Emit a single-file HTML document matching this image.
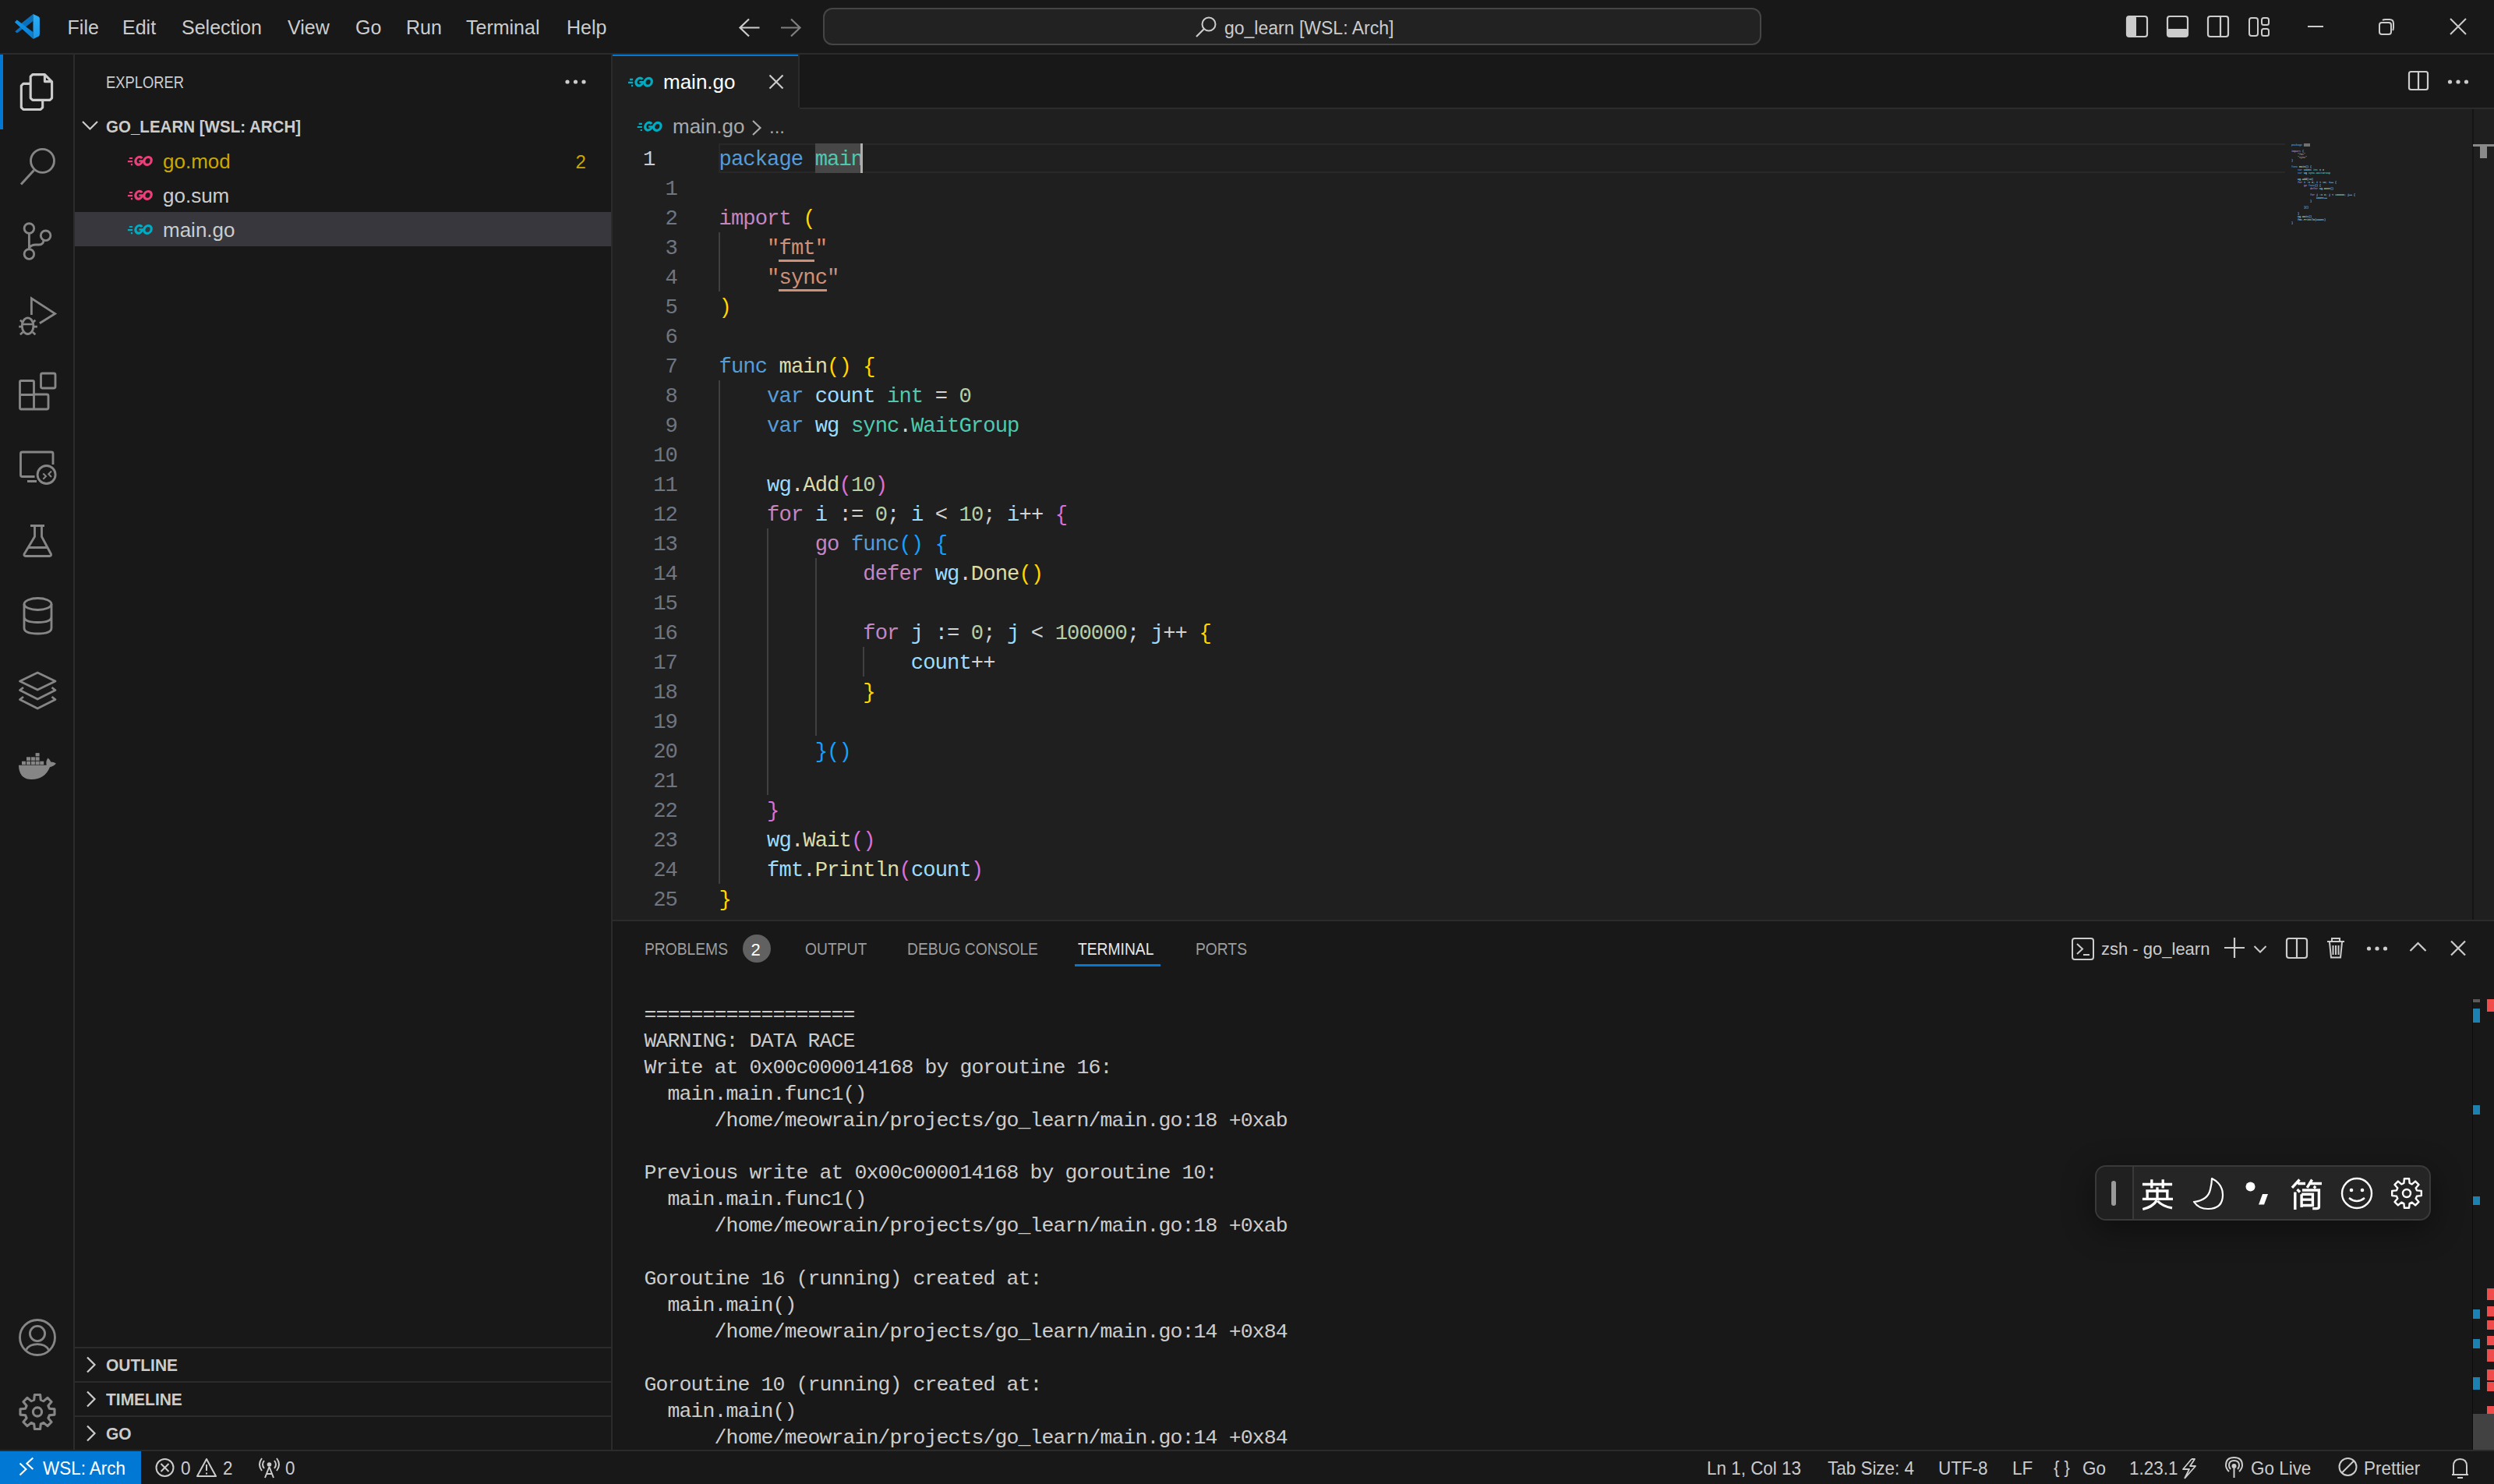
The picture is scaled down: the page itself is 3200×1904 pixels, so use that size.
<!DOCTYPE html>
<html><head><meta charset="utf-8"><title>VS Code</title>
<style>
html,body{margin:0;padding:0;width:3200px;height:1904px;overflow:hidden;background:#181818;}
body{position:relative;font-family:'Liberation Sans', sans-serif;}
</style></head><body>
<div style="position:absolute;left:0px;top:68px;width:3200px;height:2px;background:#2B2B2B;"></div><div style="position:absolute;left:86.6px;top:22.75px;font-family:'Liberation Sans', sans-serif;font-size:25px;line-height:25px;color:#CCCCCC;font-weight:400;letter-spacing:0px;white-space:pre;">File</div><div style="position:absolute;left:157px;top:22.75px;font-family:'Liberation Sans', sans-serif;font-size:25px;line-height:25px;color:#CCCCCC;font-weight:400;letter-spacing:0px;white-space:pre;">Edit</div><div style="position:absolute;left:233px;top:22.75px;font-family:'Liberation Sans', sans-serif;font-size:25px;line-height:25px;color:#CCCCCC;font-weight:400;letter-spacing:0px;white-space:pre;">Selection</div><div style="position:absolute;left:369px;top:22.75px;font-family:'Liberation Sans', sans-serif;font-size:25px;line-height:25px;color:#CCCCCC;font-weight:400;letter-spacing:0px;white-space:pre;">View</div><div style="position:absolute;left:456px;top:22.75px;font-family:'Liberation Sans', sans-serif;font-size:25px;line-height:25px;color:#CCCCCC;font-weight:400;letter-spacing:0px;white-space:pre;">Go</div><div style="position:absolute;left:521px;top:22.75px;font-family:'Liberation Sans', sans-serif;font-size:25px;line-height:25px;color:#CCCCCC;font-weight:400;letter-spacing:0px;white-space:pre;">Run</div><div style="position:absolute;left:598px;top:22.75px;font-family:'Liberation Sans', sans-serif;font-size:25px;line-height:25px;color:#CCCCCC;font-weight:400;letter-spacing:0px;white-space:pre;">Terminal</div><div style="position:absolute;left:727px;top:22.75px;font-family:'Liberation Sans', sans-serif;font-size:25px;line-height:25px;color:#CCCCCC;font-weight:400;letter-spacing:0px;white-space:pre;">Help</div><div style="position:absolute;left:1056px;top:10px;width:1204px;height:48px;box-sizing:border-box;border:2px solid #454545;border-radius:12px;background:#222222"></div><div style="position:absolute;left:1571px;top:24.95px;font-family:'Liberation Sans', sans-serif;font-size:23px;line-height:23px;color:#CCCCCC;font-weight:400;letter-spacing:0px;white-space:pre;">go_learn [WSL: Arch]</div><div style="position:absolute;left:94px;top:70px;width:2px;height:1790px;background:#2B2B2B;"></div><div style="position:absolute;left:0px;top:70px;width:4px;height:96px;background:#0078D4;"></div><div style="position:absolute;left:784px;top:70px;width:2px;height:1790px;background:#2B2B2B;"></div><div style="position:absolute;left:136px;top:95.30px;font-family:'Liberation Sans', sans-serif;font-size:22px;line-height:22px;color:#CCCCCC;font-weight:400;letter-spacing:0px;white-space:pre;transform:scaleX(0.835);transform-origin:0 0;">EXPLORER</div><div style="position:absolute;left:136px;top:152.30px;font-family:'Liberation Sans', sans-serif;font-size:22px;line-height:22px;color:#CCCCCC;font-weight:700;letter-spacing:0px;white-space:pre;transform:scaleX(0.933);transform-origin:0 0;">GO_LEARN [WSL: ARCH]</div><div style="position:absolute;left:96px;top:272px;width:688px;height:44px;background:#37373D;"></div><div style="position:absolute;left:209px;top:193.90px;font-family:'Liberation Sans', sans-serif;font-size:26px;line-height:26px;color:#CCA700;font-weight:400;letter-spacing:0px;white-space:pre;">go.mod</div><div style="position:absolute;left:738.5px;top:195.60px;font-family:'Liberation Sans', sans-serif;font-size:24px;line-height:24px;color:#CCA700;font-weight:400;letter-spacing:0px;white-space:pre;">2</div><div style="position:absolute;left:209px;top:237.90px;font-family:'Liberation Sans', sans-serif;font-size:26px;line-height:26px;color:#CCCCCC;font-weight:400;letter-spacing:0px;white-space:pre;">go.sum</div><div style="position:absolute;left:209px;top:281.90px;font-family:'Liberation Sans', sans-serif;font-size:26px;line-height:26px;color:#CCCCCC;font-weight:400;letter-spacing:0px;white-space:pre;">main.go</div><div style="position:absolute;left:96px;top:1728px;width:688px;height:2px;background:#2B2B2B;"></div><div style="position:absolute;left:136px;top:1741.30px;font-family:'Liberation Sans', sans-serif;font-size:22px;line-height:22px;color:#CCCCCC;font-weight:700;letter-spacing:0px;white-space:pre;transform:scaleX(0.953);transform-origin:0 0;">OUTLINE</div><div style="position:absolute;left:96px;top:1772px;width:688px;height:2px;background:#2B2B2B;"></div><div style="position:absolute;left:136px;top:1785.30px;font-family:'Liberation Sans', sans-serif;font-size:22px;line-height:22px;color:#CCCCCC;font-weight:700;letter-spacing:0px;white-space:pre;transform:scaleX(0.953);transform-origin:0 0;">TIMELINE</div><div style="position:absolute;left:96px;top:1816px;width:688px;height:2px;background:#2B2B2B;"></div><div style="position:absolute;left:136px;top:1829.30px;font-family:'Liberation Sans', sans-serif;font-size:22px;line-height:22px;color:#CCCCCC;font-weight:700;letter-spacing:0px;white-space:pre;transform:scaleX(0.953);transform-origin:0 0;">GO</div><div style="position:absolute;left:786px;top:70px;width:2414px;height:68px;background:#181818;"></div><div style="position:absolute;left:786px;top:138px;width:2414px;height:2px;background:#2B2B2B;"></div><div style="position:absolute;left:786px;top:70px;width:240px;height:70px;background:#1F1F1F;"></div><div style="position:absolute;left:786px;top:70px;width:240px;height:2px;background:#0078D4;"></div><div style="position:absolute;left:1024px;top:70px;width:2px;height:68px;background:#2B2B2B;"></div><div style="position:absolute;left:851px;top:91.90px;font-family:'Liberation Sans', sans-serif;font-size:26px;line-height:26px;color:#FFFFFF;font-weight:400;letter-spacing:0px;white-space:pre;">main.go</div><div style="position:absolute;left:786px;top:140px;width:2414px;height:1040px;background:#1F1F1F;"></div><div style="position:absolute;left:863px;top:148.90px;font-family:'Liberation Sans', sans-serif;font-size:26px;line-height:26px;color:#A9A9A9;font-weight:400;letter-spacing:0px;white-space:pre;">main.go</div><div style="position:absolute;left:987px;top:150.60px;font-family:'Liberation Sans', sans-serif;font-size:24px;line-height:24px;color:#A9A9A9;font-weight:400;letter-spacing:0px;white-space:pre;">...</div><div style="position:absolute;left:922.0px;top:184px;width:2009.5px;height:38px;box-sizing:border-box;border:2px solid #282828;border-right:none"></div><div style="position:absolute;left:1046px;top:184px;width:59px;height:38px;background:#474747;"></div><div style="position:absolute;left:922px;top:298px;width:2px;height:76px;background:#404040;"></div><div style="position:absolute;left:922px;top:488px;width:2px;height:646px;background:#404040;"></div><div style="position:absolute;left:984px;top:678px;width:2px;height:342px;background:#404040;"></div><div style="position:absolute;left:1046px;top:716px;width:2px;height:228px;background:#404040;"></div><div style="position:absolute;left:1107px;top:830px;width:2px;height:38px;background:#404040;"></div><div style="position:absolute;left:922.5px;top:191.33px;font-family:'Liberation Mono', monospace;font-size:27.2px;line-height:27.2px;color:#D4D4D4;font-weight:400;letter-spacing:-0.92px;white-space:pre;"><span style="color:#569CD6">package</span><span style="color:#D4D4D4"> </span><span style="color:#4EC9B0">main</span></div><div style="position:absolute;left:922.5px;top:267.33px;font-family:'Liberation Mono', monospace;font-size:27.2px;line-height:27.2px;color:#D4D4D4;font-weight:400;letter-spacing:-0.92px;white-space:pre;"><span style="color:#C586C0">import</span><span style="color:#D4D4D4"> </span><span style="color:#FFD700">(</span></div><div style="position:absolute;left:922.5px;top:305.33px;font-family:'Liberation Mono', monospace;font-size:27.2px;line-height:27.2px;color:#D4D4D4;font-weight:400;letter-spacing:-0.92px;white-space:pre;"><span style="color:#D4D4D4">    </span><span style="color:#CE9178">&quot;</span><span style="color:#CE9178">fmt</span><span style="color:#CE9178">&quot;</span></div><div style="position:absolute;left:922.5px;top:343.33px;font-family:'Liberation Mono', monospace;font-size:27.2px;line-height:27.2px;color:#D4D4D4;font-weight:400;letter-spacing:-0.92px;white-space:pre;"><span style="color:#D4D4D4">    </span><span style="color:#CE9178">&quot;</span><span style="color:#CE9178">sync</span><span style="color:#CE9178">&quot;</span></div><div style="position:absolute;left:922.5px;top:381.33px;font-family:'Liberation Mono', monospace;font-size:27.2px;line-height:27.2px;color:#D4D4D4;font-weight:400;letter-spacing:-0.92px;white-space:pre;"><span style="color:#FFD700">)</span></div><div style="position:absolute;left:922.5px;top:457.33px;font-family:'Liberation Mono', monospace;font-size:27.2px;line-height:27.2px;color:#D4D4D4;font-weight:400;letter-spacing:-0.92px;white-space:pre;"><span style="color:#569CD6">func</span><span style="color:#D4D4D4"> </span><span style="color:#DCDCAA">main</span><span style="color:#FFD700">()</span><span style="color:#D4D4D4"> </span><span style="color:#FFD700">{</span></div><div style="position:absolute;left:922.5px;top:495.33px;font-family:'Liberation Mono', monospace;font-size:27.2px;line-height:27.2px;color:#D4D4D4;font-weight:400;letter-spacing:-0.92px;white-space:pre;"><span style="color:#D4D4D4">    </span><span style="color:#569CD6">var</span><span style="color:#D4D4D4"> </span><span style="color:#9CDCFE">count</span><span style="color:#D4D4D4"> </span><span style="color:#4EC9B0">int</span><span style="color:#D4D4D4"> = </span><span style="color:#B5CEA8">0</span></div><div style="position:absolute;left:922.5px;top:533.33px;font-family:'Liberation Mono', monospace;font-size:27.2px;line-height:27.2px;color:#D4D4D4;font-weight:400;letter-spacing:-0.92px;white-space:pre;"><span style="color:#D4D4D4">    </span><span style="color:#569CD6">var</span><span style="color:#D4D4D4"> </span><span style="color:#9CDCFE">wg</span><span style="color:#D4D4D4"> </span><span style="color:#4EC9B0">sync</span><span style="color:#D4D4D4">.</span><span style="color:#4EC9B0">WaitGroup</span></div><div style="position:absolute;left:922.5px;top:609.33px;font-family:'Liberation Mono', monospace;font-size:27.2px;line-height:27.2px;color:#D4D4D4;font-weight:400;letter-spacing:-0.92px;white-space:pre;"><span style="color:#D4D4D4">    </span><span style="color:#9CDCFE">wg</span><span style="color:#D4D4D4">.</span><span style="color:#DCDCAA">Add</span><span style="color:#DA70D6">(</span><span style="color:#B5CEA8">10</span><span style="color:#DA70D6">)</span></div><div style="position:absolute;left:922.5px;top:647.33px;font-family:'Liberation Mono', monospace;font-size:27.2px;line-height:27.2px;color:#D4D4D4;font-weight:400;letter-spacing:-0.92px;white-space:pre;"><span style="color:#D4D4D4">    </span><span style="color:#C586C0">for</span><span style="color:#D4D4D4"> </span><span style="color:#9CDCFE">i</span><span style="color:#D4D4D4"> := </span><span style="color:#B5CEA8">0</span><span style="color:#D4D4D4">; </span><span style="color:#9CDCFE">i</span><span style="color:#D4D4D4"> &lt; </span><span style="color:#B5CEA8">10</span><span style="color:#D4D4D4">; </span><span style="color:#9CDCFE">i</span><span style="color:#D4D4D4">++ </span><span style="color:#DA70D6">{</span></div><div style="position:absolute;left:922.5px;top:685.33px;font-family:'Liberation Mono', monospace;font-size:27.2px;line-height:27.2px;color:#D4D4D4;font-weight:400;letter-spacing:-0.92px;white-space:pre;"><span style="color:#D4D4D4">        </span><span style="color:#C586C0">go</span><span style="color:#D4D4D4"> </span><span style="color:#569CD6">func</span><span style="color:#179FFF">()</span><span style="color:#D4D4D4"> </span><span style="color:#179FFF">{</span></div><div style="position:absolute;left:922.5px;top:723.33px;font-family:'Liberation Mono', monospace;font-size:27.2px;line-height:27.2px;color:#D4D4D4;font-weight:400;letter-spacing:-0.92px;white-space:pre;"><span style="color:#D4D4D4">            </span><span style="color:#C586C0">defer</span><span style="color:#D4D4D4"> </span><span style="color:#9CDCFE">wg</span><span style="color:#D4D4D4">.</span><span style="color:#DCDCAA">Done</span><span style="color:#FFD700">()</span></div><div style="position:absolute;left:922.5px;top:799.33px;font-family:'Liberation Mono', monospace;font-size:27.2px;line-height:27.2px;color:#D4D4D4;font-weight:400;letter-spacing:-0.92px;white-space:pre;"><span style="color:#D4D4D4">            </span><span style="color:#C586C0">for</span><span style="color:#D4D4D4"> </span><span style="color:#9CDCFE">j</span><span style="color:#D4D4D4"> := </span><span style="color:#B5CEA8">0</span><span style="color:#D4D4D4">; </span><span style="color:#9CDCFE">j</span><span style="color:#D4D4D4"> &lt; </span><span style="color:#B5CEA8">100000</span><span style="color:#D4D4D4">; </span><span style="color:#9CDCFE">j</span><span style="color:#D4D4D4">++ </span><span style="color:#FFD700">{</span></div><div style="position:absolute;left:922.5px;top:837.33px;font-family:'Liberation Mono', monospace;font-size:27.2px;line-height:27.2px;color:#D4D4D4;font-weight:400;letter-spacing:-0.92px;white-space:pre;"><span style="color:#D4D4D4">                </span><span style="color:#9CDCFE">count</span><span style="color:#D4D4D4">++</span></div><div style="position:absolute;left:922.5px;top:875.33px;font-family:'Liberation Mono', monospace;font-size:27.2px;line-height:27.2px;color:#D4D4D4;font-weight:400;letter-spacing:-0.92px;white-space:pre;"><span style="color:#D4D4D4">            </span><span style="color:#FFD700">}</span></div><div style="position:absolute;left:922.5px;top:951.33px;font-family:'Liberation Mono', monospace;font-size:27.2px;line-height:27.2px;color:#D4D4D4;font-weight:400;letter-spacing:-0.92px;white-space:pre;"><span style="color:#D4D4D4">        </span><span style="color:#179FFF">}</span><span style="color:#179FFF">()</span></div><div style="position:absolute;left:922.5px;top:1027.33px;font-family:'Liberation Mono', monospace;font-size:27.2px;line-height:27.2px;color:#D4D4D4;font-weight:400;letter-spacing:-0.92px;white-space:pre;"><span style="color:#D4D4D4">    </span><span style="color:#DA70D6">}</span></div><div style="position:absolute;left:922.5px;top:1065.33px;font-family:'Liberation Mono', monospace;font-size:27.2px;line-height:27.2px;color:#D4D4D4;font-weight:400;letter-spacing:-0.92px;white-space:pre;"><span style="color:#D4D4D4">    </span><span style="color:#9CDCFE">wg</span><span style="color:#D4D4D4">.</span><span style="color:#DCDCAA">Wait</span><span style="color:#DA70D6">()</span></div><div style="position:absolute;left:922.5px;top:1103.33px;font-family:'Liberation Mono', monospace;font-size:27.2px;line-height:27.2px;color:#D4D4D4;font-weight:400;letter-spacing:-0.92px;white-space:pre;"><span style="color:#D4D4D4">    </span><span style="color:#9CDCFE">fmt</span><span style="color:#D4D4D4">.</span><span style="color:#DCDCAA">Println</span><span style="color:#DA70D6">(</span><span style="color:#9CDCFE">count</span><span style="color:#DA70D6">)</span></div><div style="position:absolute;left:922.5px;top:1141.33px;font-family:'Liberation Mono', monospace;font-size:27.2px;line-height:27.2px;color:#D4D4D4;font-weight:400;letter-spacing:-0.92px;white-space:pre;"><span style="color:#FFD700">}</span></div><div style="position:absolute;left:999px;top:333px;width:46px;height:3px;background:#CE9178;"></div><div style="position:absolute;left:999px;top:371px;width:62px;height:3px;background:#CE9178;"></div><div style="position:absolute;left:1104px;top:184px;width:3px;height:38px;background:#AEAFAD;"></div><div style="position:absolute;left:825px;top:191.33px;font-family:'Liberation Mono', monospace;font-size:27.2px;line-height:27.2px;color:#CCCCCC;font-weight:400;letter-spacing:-0.92px;white-space:pre;">1</div><div style="position:absolute;left:853.6px;top:229.33px;font-family:'Liberation Mono', monospace;font-size:27.2px;line-height:27.2px;color:#6E7681;font-weight:400;letter-spacing:-0.92px;white-space:pre;">1</div><div style="position:absolute;left:853.6px;top:267.33px;font-family:'Liberation Mono', monospace;font-size:27.2px;line-height:27.2px;color:#6E7681;font-weight:400;letter-spacing:-0.92px;white-space:pre;">2</div><div style="position:absolute;left:853.6px;top:305.33px;font-family:'Liberation Mono', monospace;font-size:27.2px;line-height:27.2px;color:#6E7681;font-weight:400;letter-spacing:-0.92px;white-space:pre;">3</div><div style="position:absolute;left:853.6px;top:343.33px;font-family:'Liberation Mono', monospace;font-size:27.2px;line-height:27.2px;color:#6E7681;font-weight:400;letter-spacing:-0.92px;white-space:pre;">4</div><div style="position:absolute;left:853.6px;top:381.33px;font-family:'Liberation Mono', monospace;font-size:27.2px;line-height:27.2px;color:#6E7681;font-weight:400;letter-spacing:-0.92px;white-space:pre;">5</div><div style="position:absolute;left:853.6px;top:419.33px;font-family:'Liberation Mono', monospace;font-size:27.2px;line-height:27.2px;color:#6E7681;font-weight:400;letter-spacing:-0.92px;white-space:pre;">6</div><div style="position:absolute;left:853.6px;top:457.33px;font-family:'Liberation Mono', monospace;font-size:27.2px;line-height:27.2px;color:#6E7681;font-weight:400;letter-spacing:-0.92px;white-space:pre;">7</div><div style="position:absolute;left:853.6px;top:495.33px;font-family:'Liberation Mono', monospace;font-size:27.2px;line-height:27.2px;color:#6E7681;font-weight:400;letter-spacing:-0.92px;white-space:pre;">8</div><div style="position:absolute;left:853.6px;top:533.33px;font-family:'Liberation Mono', monospace;font-size:27.2px;line-height:27.2px;color:#6E7681;font-weight:400;letter-spacing:-0.92px;white-space:pre;">9</div><div style="position:absolute;left:838.2px;top:571.33px;font-family:'Liberation Mono', monospace;font-size:27.2px;line-height:27.2px;color:#6E7681;font-weight:400;letter-spacing:-0.92px;white-space:pre;">10</div><div style="position:absolute;left:838.2px;top:609.33px;font-family:'Liberation Mono', monospace;font-size:27.2px;line-height:27.2px;color:#6E7681;font-weight:400;letter-spacing:-0.92px;white-space:pre;">11</div><div style="position:absolute;left:838.2px;top:647.33px;font-family:'Liberation Mono', monospace;font-size:27.2px;line-height:27.2px;color:#6E7681;font-weight:400;letter-spacing:-0.92px;white-space:pre;">12</div><div style="position:absolute;left:838.2px;top:685.33px;font-family:'Liberation Mono', monospace;font-size:27.2px;line-height:27.2px;color:#6E7681;font-weight:400;letter-spacing:-0.92px;white-space:pre;">13</div><div style="position:absolute;left:838.2px;top:723.33px;font-family:'Liberation Mono', monospace;font-size:27.2px;line-height:27.2px;color:#6E7681;font-weight:400;letter-spacing:-0.92px;white-space:pre;">14</div><div style="position:absolute;left:838.2px;top:761.33px;font-family:'Liberation Mono', monospace;font-size:27.2px;line-height:27.2px;color:#6E7681;font-weight:400;letter-spacing:-0.92px;white-space:pre;">15</div><div style="position:absolute;left:838.2px;top:799.33px;font-family:'Liberation Mono', monospace;font-size:27.2px;line-height:27.2px;color:#6E7681;font-weight:400;letter-spacing:-0.92px;white-space:pre;">16</div><div style="position:absolute;left:838.2px;top:837.33px;font-family:'Liberation Mono', monospace;font-size:27.2px;line-height:27.2px;color:#6E7681;font-weight:400;letter-spacing:-0.92px;white-space:pre;">17</div><div style="position:absolute;left:838.2px;top:875.33px;font-family:'Liberation Mono', monospace;font-size:27.2px;line-height:27.2px;color:#6E7681;font-weight:400;letter-spacing:-0.92px;white-space:pre;">18</div><div style="position:absolute;left:838.2px;top:913.33px;font-family:'Liberation Mono', monospace;font-size:27.2px;line-height:27.2px;color:#6E7681;font-weight:400;letter-spacing:-0.92px;white-space:pre;">19</div><div style="position:absolute;left:838.2px;top:951.33px;font-family:'Liberation Mono', monospace;font-size:27.2px;line-height:27.2px;color:#6E7681;font-weight:400;letter-spacing:-0.92px;white-space:pre;">20</div><div style="position:absolute;left:838.2px;top:989.33px;font-family:'Liberation Mono', monospace;font-size:27.2px;line-height:27.2px;color:#6E7681;font-weight:400;letter-spacing:-0.92px;white-space:pre;">21</div><div style="position:absolute;left:838.2px;top:1027.33px;font-family:'Liberation Mono', monospace;font-size:27.2px;line-height:27.2px;color:#6E7681;font-weight:400;letter-spacing:-0.92px;white-space:pre;">22</div><div style="position:absolute;left:838.2px;top:1065.33px;font-family:'Liberation Mono', monospace;font-size:27.2px;line-height:27.2px;color:#6E7681;font-weight:400;letter-spacing:-0.92px;white-space:pre;">23</div><div style="position:absolute;left:838.2px;top:1103.33px;font-family:'Liberation Mono', monospace;font-size:27.2px;line-height:27.2px;color:#6E7681;font-weight:400;letter-spacing:-0.92px;white-space:pre;">24</div><div style="position:absolute;left:838.2px;top:1141.33px;font-family:'Liberation Mono', monospace;font-size:27.2px;line-height:27.2px;color:#6E7681;font-weight:400;letter-spacing:-0.92px;white-space:pre;">25</div><div style="position:absolute;left:2932px;top:140px;width:241px;height:1040px;background:#1F1F1F;"></div><div style="position:absolute;left:2940px;top:183.7px;font-family:'Liberation Mono', monospace;font-size:3.333px;line-height:4px;white-space:pre;opacity:0.9;font-weight:700"><span style="color:#569CD6">package</span><span style="color:#D4D4D4"> </span><span style="color:#4EC9B0">main</span></div><div style="position:absolute;left:2940px;top:191.7px;font-family:'Liberation Mono', monospace;font-size:3.333px;line-height:4px;white-space:pre;opacity:0.9;font-weight:700"><span style="color:#C586C0">import</span><span style="color:#D4D4D4"> </span><span style="color:#D4D4D4">(</span></div><div style="position:absolute;left:2940px;top:195.7px;font-family:'Liberation Mono', monospace;font-size:3.333px;line-height:4px;white-space:pre;opacity:0.9;font-weight:700"><span style="color:#D4D4D4">    </span><span style="color:#CE9178">&quot;</span><span style="color:#CE9178">fmt</span><span style="color:#CE9178">&quot;</span></div><div style="position:absolute;left:2940px;top:199.7px;font-family:'Liberation Mono', monospace;font-size:3.333px;line-height:4px;white-space:pre;opacity:0.9;font-weight:700"><span style="color:#D4D4D4">    </span><span style="color:#CE9178">&quot;</span><span style="color:#CE9178">sync</span><span style="color:#CE9178">&quot;</span></div><div style="position:absolute;left:2940px;top:203.7px;font-family:'Liberation Mono', monospace;font-size:3.333px;line-height:4px;white-space:pre;opacity:0.9;font-weight:700"><span style="color:#D4D4D4">)</span></div><div style="position:absolute;left:2940px;top:211.7px;font-family:'Liberation Mono', monospace;font-size:3.333px;line-height:4px;white-space:pre;opacity:0.9;font-weight:700"><span style="color:#569CD6">func</span><span style="color:#D4D4D4"> </span><span style="color:#DCDCAA">main</span><span style="color:#D4D4D4">()</span><span style="color:#D4D4D4"> </span><span style="color:#D4D4D4">{</span></div><div style="position:absolute;left:2940px;top:215.7px;font-family:'Liberation Mono', monospace;font-size:3.333px;line-height:4px;white-space:pre;opacity:0.9;font-weight:700"><span style="color:#D4D4D4">    </span><span style="color:#569CD6">var</span><span style="color:#D4D4D4"> </span><span style="color:#9CDCFE">count</span><span style="color:#D4D4D4"> </span><span style="color:#4EC9B0">int</span><span style="color:#D4D4D4"> = </span><span style="color:#B5CEA8">0</span></div><div style="position:absolute;left:2940px;top:219.7px;font-family:'Liberation Mono', monospace;font-size:3.333px;line-height:4px;white-space:pre;opacity:0.9;font-weight:700"><span style="color:#D4D4D4">    </span><span style="color:#569CD6">var</span><span style="color:#D4D4D4"> </span><span style="color:#9CDCFE">wg</span><span style="color:#D4D4D4"> </span><span style="color:#4EC9B0">sync</span><span style="color:#D4D4D4">.</span><span style="color:#4EC9B0">WaitGroup</span></div><div style="position:absolute;left:2940px;top:227.7px;font-family:'Liberation Mono', monospace;font-size:3.333px;line-height:4px;white-space:pre;opacity:0.9;font-weight:700"><span style="color:#D4D4D4">    </span><span style="color:#9CDCFE">wg</span><span style="color:#D4D4D4">.</span><span style="color:#DCDCAA">Add</span><span style="color:#D4D4D4">(</span><span style="color:#B5CEA8">10</span><span style="color:#D4D4D4">)</span></div><div style="position:absolute;left:2940px;top:231.7px;font-family:'Liberation Mono', monospace;font-size:3.333px;line-height:4px;white-space:pre;opacity:0.9;font-weight:700"><span style="color:#D4D4D4">    </span><span style="color:#C586C0">for</span><span style="color:#D4D4D4"> </span><span style="color:#9CDCFE">i</span><span style="color:#D4D4D4"> := </span><span style="color:#B5CEA8">0</span><span style="color:#D4D4D4">; </span><span style="color:#9CDCFE">i</span><span style="color:#D4D4D4"> &lt; </span><span style="color:#B5CEA8">10</span><span style="color:#D4D4D4">; </span><span style="color:#9CDCFE">i</span><span style="color:#D4D4D4">++ </span><span style="color:#D4D4D4">{</span></div><div style="position:absolute;left:2940px;top:235.7px;font-family:'Liberation Mono', monospace;font-size:3.333px;line-height:4px;white-space:pre;opacity:0.9;font-weight:700"><span style="color:#D4D4D4">        </span><span style="color:#C586C0">go</span><span style="color:#D4D4D4"> </span><span style="color:#569CD6">func</span><span style="color:#D4D4D4">()</span><span style="color:#D4D4D4"> </span><span style="color:#D4D4D4">{</span></div><div style="position:absolute;left:2940px;top:239.7px;font-family:'Liberation Mono', monospace;font-size:3.333px;line-height:4px;white-space:pre;opacity:0.9;font-weight:700"><span style="color:#D4D4D4">            </span><span style="color:#C586C0">defer</span><span style="color:#D4D4D4"> </span><span style="color:#9CDCFE">wg</span><span style="color:#D4D4D4">.</span><span style="color:#DCDCAA">Done</span><span style="color:#D4D4D4">()</span></div><div style="position:absolute;left:2940px;top:247.7px;font-family:'Liberation Mono', monospace;font-size:3.333px;line-height:4px;white-space:pre;opacity:0.9;font-weight:700"><span style="color:#D4D4D4">            </span><span style="color:#C586C0">for</span><span style="color:#D4D4D4"> </span><span style="color:#9CDCFE">j</span><span style="color:#D4D4D4"> := </span><span style="color:#B5CEA8">0</span><span style="color:#D4D4D4">; </span><span style="color:#9CDCFE">j</span><span style="color:#D4D4D4"> &lt; </span><span style="color:#B5CEA8">100000</span><span style="color:#D4D4D4">; </span><span style="color:#9CDCFE">j</span><span style="color:#D4D4D4">++ </span><span style="color:#D4D4D4">{</span></div><div style="position:absolute;left:2940px;top:251.7px;font-family:'Liberation Mono', monospace;font-size:3.333px;line-height:4px;white-space:pre;opacity:0.9;font-weight:700"><span style="color:#D4D4D4">                </span><span style="color:#9CDCFE">count</span><span style="color:#D4D4D4">++</span></div><div style="position:absolute;left:2940px;top:255.7px;font-family:'Liberation Mono', monospace;font-size:3.333px;line-height:4px;white-space:pre;opacity:0.9;font-weight:700"><span style="color:#D4D4D4">            </span><span style="color:#D4D4D4">}</span></div><div style="position:absolute;left:2940px;top:263.7px;font-family:'Liberation Mono', monospace;font-size:3.333px;line-height:4px;white-space:pre;opacity:0.9;font-weight:700"><span style="color:#D4D4D4">        </span><span style="color:#D4D4D4">}</span><span style="color:#D4D4D4">()</span></div><div style="position:absolute;left:2940px;top:271.7px;font-family:'Liberation Mono', monospace;font-size:3.333px;line-height:4px;white-space:pre;opacity:0.9;font-weight:700"><span style="color:#D4D4D4">    </span><span style="color:#D4D4D4">}</span></div><div style="position:absolute;left:2940px;top:275.7px;font-family:'Liberation Mono', monospace;font-size:3.333px;line-height:4px;white-space:pre;opacity:0.9;font-weight:700"><span style="color:#D4D4D4">    </span><span style="color:#9CDCFE">wg</span><span style="color:#D4D4D4">.</span><span style="color:#DCDCAA">Wait</span><span style="color:#D4D4D4">()</span></div><div style="position:absolute;left:2940px;top:279.7px;font-family:'Liberation Mono', monospace;font-size:3.333px;line-height:4px;white-space:pre;opacity:0.9;font-weight:700"><span style="color:#D4D4D4">    </span><span style="color:#9CDCFE">fmt</span><span style="color:#D4D4D4">.</span><span style="color:#DCDCAA">Println</span><span style="color:#D4D4D4">(</span><span style="color:#9CDCFE">count</span><span style="color:#D4D4D4">)</span></div><div style="position:absolute;left:2940px;top:283.7px;font-family:'Liberation Mono', monospace;font-size:3.333px;line-height:4px;white-space:pre;opacity:0.9;font-weight:700"><span style="color:#D4D4D4">}</span></div><div style="position:absolute;left:2956px;top:184px;width:8px;height:4px;background:#707070;"></div><div style="position:absolute;left:3172px;top:140px;width:2px;height:1040px;background:#141414;"></div><div style="position:absolute;left:3173px;top:185px;width:27px;height:3px;background:#8a8a8a;"></div><div style="position:absolute;left:3182px;top:185px;width:9px;height:18px;background:#8a8a8a;"></div><div style="position:absolute;left:786px;top:1180px;width:2414px;height:2px;background:#2B2B2B;"></div><div style="position:absolute;left:786px;top:1182px;width:2414px;height:678px;background:#181818;"></div><div style="position:absolute;left:826.5px;top:1207.30px;font-family:'Liberation Sans', sans-serif;font-size:22px;line-height:22px;color:#9D9D9D;font-weight:400;letter-spacing:0px;white-space:pre;transform:scaleX(0.875);transform-origin:0 0;">PROBLEMS</div><div style="position:absolute;left:1033px;top:1207.30px;font-family:'Liberation Sans', sans-serif;font-size:22px;line-height:22px;color:#9D9D9D;font-weight:400;letter-spacing:0px;white-space:pre;transform:scaleX(0.875);transform-origin:0 0;">OUTPUT</div><div style="position:absolute;left:1164px;top:1207.30px;font-family:'Liberation Sans', sans-serif;font-size:22px;line-height:22px;color:#9D9D9D;font-weight:400;letter-spacing:0px;white-space:pre;transform:scaleX(0.875);transform-origin:0 0;">DEBUG CONSOLE</div><div style="position:absolute;left:1383px;top:1207.30px;font-family:'Liberation Sans', sans-serif;font-size:22px;line-height:22px;color:#E7E7E7;font-weight:400;letter-spacing:0px;white-space:pre;transform:scaleX(0.875);transform-origin:0 0;">TERMINAL</div><div style="position:absolute;left:1534px;top:1207.30px;font-family:'Liberation Sans', sans-serif;font-size:22px;line-height:22px;color:#9D9D9D;font-weight:400;letter-spacing:0px;white-space:pre;transform:scaleX(0.875);transform-origin:0 0;">PORTS</div><div style="position:absolute;left:953px;top:1199px;width:36px;height:36px;border-radius:18px;background:#616161"></div><div style="position:absolute;left:963.5px;top:1207.80px;font-family:'Liberation Sans', sans-serif;font-size:22px;line-height:22px;color:#FFFFFF;font-weight:400;letter-spacing:0px;white-space:pre;">2</div><div style="position:absolute;left:1379px;top:1237px;width:110px;height:3px;background:#0078D4;"></div><div style="position:absolute;left:2696px;top:1207.30px;font-family:'Liberation Sans', sans-serif;font-size:22px;line-height:22px;color:#CCCCCC;font-weight:400;letter-spacing:0px;white-space:pre;">zsh - go_learn</div><div style="position:absolute;left:826.5px;top:1288.86px;font-family:'Liberation Mono', monospace;font-size:26.5px;line-height:26.5px;color:#CCCCCC;font-weight:400;letter-spacing:-0.9px;white-space:pre;">==================</div><div style="position:absolute;left:826.5px;top:1322.79px;font-family:'Liberation Mono', monospace;font-size:26.5px;line-height:26.5px;color:#CCCCCC;font-weight:400;letter-spacing:-0.9px;white-space:pre;">WARNING: DATA RACE</div><div style="position:absolute;left:826.5px;top:1356.72px;font-family:'Liberation Mono', monospace;font-size:26.5px;line-height:26.5px;color:#CCCCCC;font-weight:400;letter-spacing:-0.9px;white-space:pre;">Write at 0x00c000014168 by goroutine 16:</div><div style="position:absolute;left:826.5px;top:1390.65px;font-family:'Liberation Mono', monospace;font-size:26.5px;line-height:26.5px;color:#CCCCCC;font-weight:400;letter-spacing:-0.9px;white-space:pre;">  main.main.func1()</div><div style="position:absolute;left:826.5px;top:1424.58px;font-family:'Liberation Mono', monospace;font-size:26.5px;line-height:26.5px;color:#CCCCCC;font-weight:400;letter-spacing:-0.9px;white-space:pre;">      /home/meowrain/projects/go_learn/main.go:18 +0xab</div><div style="position:absolute;left:826.5px;top:1492.44px;font-family:'Liberation Mono', monospace;font-size:26.5px;line-height:26.5px;color:#CCCCCC;font-weight:400;letter-spacing:-0.9px;white-space:pre;">Previous write at 0x00c000014168 by goroutine 10:</div><div style="position:absolute;left:826.5px;top:1526.37px;font-family:'Liberation Mono', monospace;font-size:26.5px;line-height:26.5px;color:#CCCCCC;font-weight:400;letter-spacing:-0.9px;white-space:pre;">  main.main.func1()</div><div style="position:absolute;left:826.5px;top:1560.30px;font-family:'Liberation Mono', monospace;font-size:26.5px;line-height:26.5px;color:#CCCCCC;font-weight:400;letter-spacing:-0.9px;white-space:pre;">      /home/meowrain/projects/go_learn/main.go:18 +0xab</div><div style="position:absolute;left:826.5px;top:1628.16px;font-family:'Liberation Mono', monospace;font-size:26.5px;line-height:26.5px;color:#CCCCCC;font-weight:400;letter-spacing:-0.9px;white-space:pre;">Goroutine 16 (running) created at:</div><div style="position:absolute;left:826.5px;top:1662.09px;font-family:'Liberation Mono', monospace;font-size:26.5px;line-height:26.5px;color:#CCCCCC;font-weight:400;letter-spacing:-0.9px;white-space:pre;">  main.main()</div><div style="position:absolute;left:826.5px;top:1696.02px;font-family:'Liberation Mono', monospace;font-size:26.5px;line-height:26.5px;color:#CCCCCC;font-weight:400;letter-spacing:-0.9px;white-space:pre;">      /home/meowrain/projects/go_learn/main.go:14 +0x84</div><div style="position:absolute;left:826.5px;top:1763.88px;font-family:'Liberation Mono', monospace;font-size:26.5px;line-height:26.5px;color:#CCCCCC;font-weight:400;letter-spacing:-0.9px;white-space:pre;">Goroutine 10 (running) created at:</div><div style="position:absolute;left:826.5px;top:1797.81px;font-family:'Liberation Mono', monospace;font-size:26.5px;line-height:26.5px;color:#CCCCCC;font-weight:400;letter-spacing:-0.9px;white-space:pre;">  main.main()</div><div style="position:absolute;left:826.5px;top:1831.74px;font-family:'Liberation Mono', monospace;font-size:26.5px;line-height:26.5px;color:#CCCCCC;font-weight:400;letter-spacing:-0.9px;white-space:pre;">      /home/meowrain/projects/go_learn/main.go:14 +0x84</div><div style="position:absolute;left:3172px;top:1282px;width:1px;height:578px;background:#0c0c0c;"></div><div style="position:absolute;left:3173px;top:1282px;width:9px;height:4px;background:#5a5a5a;"></div><div style="position:absolute;left:3173px;top:1294px;width:9px;height:18px;background:#1B80B2;"></div><div style="position:absolute;left:3173px;top:1418px;width:9px;height:12px;background:#1B80B2;"></div><div style="position:absolute;left:3173px;top:1535px;width:9px;height:11px;background:#1B80B2;"></div><div style="position:absolute;left:3173px;top:1680px;width:9px;height:12px;background:#1B80B2;"></div><div style="position:absolute;left:3173px;top:1718px;width:9px;height:12px;background:#1B80B2;"></div><div style="position:absolute;left:3173px;top:1767px;width:9px;height:16px;background:#1B80B2;"></div><div style="position:absolute;left:3191px;top:1282px;width:9px;height:16px;background:#F14C4C;"></div><div style="position:absolute;left:3191px;top:1653px;width:9px;height:15px;background:#F14C4C;"></div><div style="position:absolute;left:3191px;top:1676px;width:9px;height:13px;background:#F14C4C;"></div><div style="position:absolute;left:3191px;top:1694px;width:9px;height:12px;background:#F14C4C;"></div><div style="position:absolute;left:3191px;top:1714px;width:9px;height:12px;background:#F14C4C;"></div><div style="position:absolute;left:3191px;top:1731px;width:9px;height:16px;background:#F14C4C;"></div><div style="position:absolute;left:3191px;top:1757px;width:9px;height:14px;background:#F14C4C;"></div><div style="position:absolute;left:3191px;top:1773px;width:9px;height:12px;background:#F14C4C;"></div><div style="position:absolute;left:3191px;top:1804px;width:9px;height:12px;background:#F14C4C;"></div><div style="position:absolute;left:3173px;top:1814px;width:27px;height:46px;background:#424242;"></div><div style="position:absolute;left:2688px;top:1495px;width:431px;height:71px;box-sizing:border-box;border:2px solid #3A3A3A;border-radius:14px;background:#252525;box-shadow:0 10px 40px rgba(0,0,0,0.45)"></div><div style="position:absolute;left:2690px;top:1497px;width:46px;height:67px;background:#202020;border-radius:12px 0 0 12px;"></div><div style="position:absolute;left:2736px;top:1497px;width:2px;height:67px;background:#3A3A3A;"></div><div style="position:absolute;left:2709px;top:1515px;width:6px;height:32px;background:#9A9A9A;border-radius:3px;"></div><div style="position:absolute;left:0px;top:1860px;width:3200px;height:2px;background:#2B2B2B;"></div><div style="position:absolute;left:0px;top:1862px;width:3200px;height:42px;background:#181818;"></div><div style="position:absolute;left:0px;top:1862px;width:181px;height:42px;background:#0078D4;"></div><div style="position:absolute;left:54.5px;top:1871.60px;font-family:'Liberation Sans', sans-serif;font-size:24px;line-height:24px;color:#FFFFFF;font-weight:400;letter-spacing:0px;white-space:pre;transform:scaleX(0.935);transform-origin:0 0;">WSL: Arch</div><div style="position:absolute;left:232px;top:1871.60px;font-family:'Liberation Sans', sans-serif;font-size:24px;line-height:24px;color:#CCCCCC;font-weight:400;letter-spacing:0px;white-space:pre;transform:scaleX(0.935);transform-origin:0 0;">0</div><div style="position:absolute;left:286px;top:1871.60px;font-family:'Liberation Sans', sans-serif;font-size:24px;line-height:24px;color:#CCCCCC;font-weight:400;letter-spacing:0px;white-space:pre;transform:scaleX(0.935);transform-origin:0 0;">2</div><div style="position:absolute;left:366px;top:1871.60px;font-family:'Liberation Sans', sans-serif;font-size:24px;line-height:24px;color:#CCCCCC;font-weight:400;letter-spacing:0px;white-space:pre;transform:scaleX(0.935);transform-origin:0 0;">0</div><div style="position:absolute;left:2190px;top:1871.60px;font-family:'Liberation Sans', sans-serif;font-size:24px;line-height:24px;color:#CCCCCC;font-weight:400;letter-spacing:0px;white-space:pre;transform:scaleX(0.935);transform-origin:0 0;">Ln 1, Col 13</div><div style="position:absolute;left:2345px;top:1871.60px;font-family:'Liberation Sans', sans-serif;font-size:24px;line-height:24px;color:#CCCCCC;font-weight:400;letter-spacing:0px;white-space:pre;transform:scaleX(0.935);transform-origin:0 0;">Tab Size: 4</div><div style="position:absolute;left:2487px;top:1871.60px;font-family:'Liberation Sans', sans-serif;font-size:24px;line-height:24px;color:#CCCCCC;font-weight:400;letter-spacing:0px;white-space:pre;transform:scaleX(0.935);transform-origin:0 0;">UTF-8</div><div style="position:absolute;left:2582px;top:1871.60px;font-family:'Liberation Sans', sans-serif;font-size:24px;line-height:24px;color:#CCCCCC;font-weight:400;letter-spacing:0px;white-space:pre;transform:scaleX(0.935);transform-origin:0 0;">LF</div><div style="position:absolute;left:2672px;top:1871.60px;font-family:'Liberation Sans', sans-serif;font-size:24px;line-height:24px;color:#CCCCCC;font-weight:400;letter-spacing:0px;white-space:pre;transform:scaleX(0.935);transform-origin:0 0;">Go</div><div style="position:absolute;left:2732px;top:1871.60px;font-family:'Liberation Sans', sans-serif;font-size:24px;line-height:24px;color:#CCCCCC;font-weight:400;letter-spacing:0px;white-space:pre;transform:scaleX(0.935);transform-origin:0 0;">1.23.1</div><div style="position:absolute;left:2888px;top:1871.60px;font-family:'Liberation Sans', sans-serif;font-size:24px;line-height:24px;color:#CCCCCC;font-weight:400;letter-spacing:0px;white-space:pre;transform:scaleX(0.935);transform-origin:0 0;">Go Live</div><div style="position:absolute;left:3033px;top:1871.60px;font-family:'Liberation Sans', sans-serif;font-size:24px;line-height:24px;color:#CCCCCC;font-weight:400;letter-spacing:0px;white-space:pre;transform:scaleX(0.935);transform-origin:0 0;">Prettier</div><div style="position:absolute;left:2635px;top:1872.30px;font-family:'Liberation Sans', sans-serif;font-size:22px;line-height:22px;color:#CCCCCC;font-weight:400;letter-spacing:0px;white-space:pre;">{ }</div>
<svg style="position:absolute;left:0;top:0" width="3200" height="1904" viewBox="0 0 3200 1904">
<defs><linearGradient id="lgR" x1="0" y1="0" x2="0" y2="1"><stop offset="0" stop-color="#2AB0F7"/><stop offset="1" stop-color="#1A96E8"/></linearGradient>
<linearGradient id="lgL" x1="0" y1="0" x2="1" y2="1"><stop offset="0" stop-color="#0F99EC"/><stop offset="1" stop-color="#0A7BD0"/></linearGradient></defs>
<path d="M42.5 17.9 L42.5 27 L32 35.2 L26 31 Z" fill="#0B70BC"/>
<path d="M19.3 40.2 L21.9 42.5 L29.5 36.8 L26.5 34.2 Z" fill="#0B70BC"/>
<path d="M18.9 28.4 L21.7 25.6 L42.5 41.2 L42.5 50.1 Z" fill="url(#lgL)"/>
<path d="M42.5 17.9 L49.4 21.2 Q50.9 22 50.9 24 V44.1 Q50.9 46.1 49.4 46.8 L42.5 50.1 Z" fill="url(#lgR)"/><path d="M961 24.5 L949.5 35.5 L961 46.5 M950 35.5 H974.5" stroke="#CCCCCC" stroke-width="2.2" fill="none"/><path d="M1015 24.5 L1026.5 35.5 L1015 46.5 M1026 35.5 H1002" stroke="#7F7F7F" stroke-width="2.2" fill="none"/><circle cx="1551" cy="31" r="8.5" stroke="#CCCCCC" stroke-width="2" fill="none"/><path d="M1545 37 L1535 47" stroke="#CCCCCC" stroke-width="2.2"/><rect x="2729" y="21" width="26" height="26" rx="3" stroke="#CCCCCC" stroke-width="2.2" fill="none"/><rect x="2729" y="21" width="12" height="26" rx="2" fill="#CCCCCC"/><rect x="2781" y="21" width="26" height="26" rx="3" stroke="#CCCCCC" stroke-width="2.2" fill="none"/><rect x="2781" y="37" width="26" height="10" rx="2" fill="#CCCCCC"/><rect x="2833" y="21" width="26" height="26" rx="3" stroke="#CCCCCC" stroke-width="2.2" fill="none"/><path d="M2849 21 V47" stroke="#CCCCCC" stroke-width="2.2"/><rect x="2886" y="23" width="11" height="23" rx="3" stroke="#CCCCCC" stroke-width="2" fill="none"/><rect x="2902" y="23" width="9" height="9" rx="2.5" stroke="#CCCCCC" stroke-width="2" fill="none"/><rect x="2902" y="37" width="9" height="9" rx="2.5" stroke="#CCCCCC" stroke-width="2" fill="none"/><path d="M2961 34 H2981" stroke="#CCCCCC" stroke-width="2"/><rect x="3053" y="29" width="15" height="15" rx="3" stroke="#CCCCCC" stroke-width="2" fill="none"/><path d="M3057 26 Q3058 25 3061 25 H3066 Q3071 25 3071 30 V35 Q3071 38 3070 39" stroke="#CCCCCC" stroke-width="2" fill="none"/><path d="M3144 24 L3164 44 M3164 24 L3144 44" stroke="#CCCCCC" stroke-width="2"/><path d="M39.2 98.2 L41.8 95.6 H57.4 L66.6 104.8 V125.8 L64 128.4 H41.8 L39.2 125.8 Z M57.4 95.6 V104.6 H66.6" stroke="#CCCCCC" stroke-width="3.1" fill="none" stroke-linejoin="round"/>
<path d="M39.2 107.4 H29.9 L27.3 110 V137.9 L29.9 140.5 H52.1 L54.7 137.9 V128.4" stroke="#CCCCCC" stroke-width="3.1" fill="none" stroke-linejoin="round"/><circle cx="54.5" cy="206.3" r="15" stroke="#868686" stroke-width="2.85" fill="none"/><path d="M43.5 218.5 L27 236.5" stroke="#868686" stroke-width="3"/><circle cx="37.4" cy="293" r="6.3" stroke="#868686" stroke-width="2.85" fill="none"/>
<circle cx="58.6" cy="302.3" r="6.3" stroke="#868686" stroke-width="2.85" fill="none"/>
<circle cx="37.4" cy="326" r="6.3" stroke="#868686" stroke-width="2.85" fill="none"/>
<path d="M37.4 299.3 V319.7 M37.4 318 Q40 314 46 314 H50 Q56 314 56 307.5" stroke="#868686" stroke-width="2.85" fill="none"/><path d="M40.4 404 V382.8 L70.6 402.4 L50.9 414.7" stroke="#868686" stroke-width="2.85" fill="none" stroke-linejoin="miter"/>
<ellipse cx="35.6" cy="418.2" rx="7.3" ry="10.3" stroke="#868686" stroke-width="2.85" fill="none"/>
<path d="M28.5 416 H42.8 M24.2 419.2 H28.3 M43 419.2 H47.9 M25.9 410.8 L29.5 414 M45.4 410.8 L41.8 414 M25.9 429.2 L29.5 426 M45.4 429.2 L41.8 426" stroke="#868686" stroke-width="2.7" fill="none"/><path d="M25.5 490 Q25.5 488.5 27 488.5 H42 Q43.5 488.5 43.5 490 V506 H60 Q62 506 62 508 V523 Q62 525 60 525 H27 Q25.5 525 25.5 523 Z M25.5 506.5 H43.5 V525" stroke="#868686" stroke-width="2.85" fill="none"/>
<rect x="52.5" y="479" width="18.5" height="19" rx="2" stroke="#868686" stroke-width="2.85" fill="none"/><path d="M68 596 V582 Q68 580 66 580 H28.5 Q26.5 580 26.5 582 V609.5 Q26.5 611.5 28.5 611.5 H44.5 M35 617.5 H47" stroke="#868686" stroke-width="2.85" fill="none"/>
<circle cx="59.6" cy="609" r="11.5" stroke="#868686" stroke-width="2.85" fill="none"/>
<path d="M55.3 607.5 L59 611 L55.3 614.8 M66 604.5 L62.3 608.2 L66 612" stroke="#868686" stroke-width="2" fill="none"/><path d="M39 674.5 H57 M44.5 675 V688.5 L31 711 Q30.5 713.5 33 713.5 H63.5 Q66 713.5 65.5 711 L53.5 688.5 V675 M36 702.5 H60" stroke="#868686" stroke-width="2.85" fill="none" stroke-linejoin="round"/><ellipse cx="48.5" cy="775" rx="17.5" ry="7.5" stroke="#868686" stroke-width="2.85" fill="none"/>
<path d="M31 775 V805.5 Q31 813 48.5 813 Q66 813 66 805.5 V775 M31 791 Q31 798.5 48.5 798.5 Q66 798.5 66 791" stroke="#868686" stroke-width="2.85" fill="none"/><path d="M48.2 863 L71 874 L48.2 885 L25.5 874 Z" stroke="#868686" stroke-width="2.85" fill="none" stroke-linejoin="round"/>
<path d="M30 882 L25.5 885.5 L48.2 897 L71 885.5 L66.5 882 M30 894 L25.5 897.5 L48.2 909 L71 897.5 L66.5 894" stroke="#868686" stroke-width="2.85" fill="none" stroke-linejoin="round"/><path d="M24 981.8 H59.6 Q58.6 976 61.5 972.4 Q64.3 974.5 65.2 977.6 Q69 977.6 71.9 979.6 Q69 983.4 64 984.3 Q57.5 1000 40.5 1000 Q26.5 1000 24.3 986 Z" fill="#868686"/>
<g fill="#868686"><rect x="28" y="976.7" width="5" height="4.5"/><rect x="34" y="976.7" width="5" height="4.5"/><rect x="39.9" y="976.7" width="5" height="4.5"/><rect x="45.6" y="976.7" width="5" height="4.5"/><rect x="51.2" y="976.7" width="5" height="4.5"/>
<rect x="34" y="971.3" width="5" height="4.5"/><rect x="39.9" y="971.3" width="5" height="4.5"/><rect x="45.6" y="971.3" width="5" height="4.5"/><rect x="45.6" y="966.1" width="5" height="4.2"/></g><circle cx="48" cy="1716" r="22.5" stroke="#868686" stroke-width="2.85" fill="none"/>
<circle cx="48" cy="1711" r="9.6" stroke="#868686" stroke-width="2.85" fill="none"/>
<path d="M33.6 1731.8 A15.5 11.5 0 0 1 62.4 1731.8" stroke="#868686" stroke-width="2.85" fill="none"/><path d="M63.4 1807.2 L70.0 1807.9 L70.0 1815.1 L63.4 1815.8 L61.9 1819.4 L66.1 1824.5 L61.0 1829.6 L55.9 1825.4 L52.3 1826.9 L51.6 1833.5 L44.4 1833.5 L43.7 1826.9 L40.1 1825.4 L35.0 1829.6 L29.9 1824.5 L34.1 1819.4 L32.6 1815.8 L26.0 1815.1 L26.0 1807.9 L32.6 1807.2 L34.1 1803.6 L29.9 1798.5 L35.0 1793.4 L40.1 1797.6 L43.7 1796.1 L44.4 1789.5 L51.6 1789.5 L52.3 1796.1 L55.9 1797.6 L61.0 1793.4 L66.1 1798.5 L61.9 1803.6 Z" stroke="#868686" stroke-width="3.1" fill="none" stroke-linejoin="round"/><circle cx="48" cy="1811.5" r="5.6" stroke="#868686" stroke-width="3.1" fill="none"/><g fill="#CCCCCC"><circle cx="728" cy="105" r="2.6"/><circle cx="738.5" cy="105" r="2.6"/><circle cx="749" cy="105" r="2.6"/></g><path d="M106 156 L115.5 165.5 L125 156" stroke="#CCCCCC" stroke-width="2.2" fill="none"/><g transform="translate(163.5,199.5) scale(1.0)"><path d="M2.4 3.5 H6.6 M0.4 7.6 H6.6 M4.4 11.6 H6.6" stroke="#EC407A" stroke-width="2.2"/><g transform="translate(1,0) skewX(-8)"><path d="M18.2 3.6 A4.4 4.95 0 1 0 19.1 7.6" stroke="#EC407A" stroke-width="3.2" fill="none"/><path d="M14.8 7.05 H20.6" stroke="#EC407A" stroke-width="2.5"/><ellipse cx="26.0" cy="6.95" rx="4.65" ry="4.95" stroke="#EC407A" stroke-width="3.2" fill="none"/></g></g><g transform="translate(163.5,243.5) scale(1.0)"><path d="M2.4 3.5 H6.6 M0.4 7.6 H6.6 M4.4 11.6 H6.6" stroke="#EC407A" stroke-width="2.2"/><g transform="translate(1,0) skewX(-8)"><path d="M18.2 3.6 A4.4 4.95 0 1 0 19.1 7.6" stroke="#EC407A" stroke-width="3.2" fill="none"/><path d="M14.8 7.05 H20.6" stroke="#EC407A" stroke-width="2.5"/><ellipse cx="26.0" cy="6.95" rx="4.65" ry="4.95" stroke="#EC407A" stroke-width="3.2" fill="none"/></g></g><g transform="translate(163.5,287.5) scale(1.0)"><path d="M2.4 3.5 H6.6 M0.4 7.6 H6.6 M4.4 11.6 H6.6" stroke="#00ACC1" stroke-width="2.2"/><g transform="translate(1,0) skewX(-8)"><path d="M18.2 3.6 A4.4 4.95 0 1 0 19.1 7.6" stroke="#00ACC1" stroke-width="3.2" fill="none"/><path d="M14.8 7.05 H20.6" stroke="#00ACC1" stroke-width="2.5"/><ellipse cx="26.0" cy="6.95" rx="4.65" ry="4.95" stroke="#00ACC1" stroke-width="3.2" fill="none"/></g></g><path d="M112 1741.5 L121.5 1751 L112 1760.5" stroke="#CCCCCC" stroke-width="2.2" fill="none"/><path d="M112 1785.5 L121.5 1795 L112 1804.5" stroke="#CCCCCC" stroke-width="2.2" fill="none"/><path d="M112 1829.5 L121.5 1839 L112 1848.5" stroke="#CCCCCC" stroke-width="2.2" fill="none"/><g transform="translate(805.6,98.3) scale(1.0)"><path d="M2.4 3.5 H6.6 M0.4 7.6 H6.6 M4.4 11.6 H6.6" stroke="#00ACC1" stroke-width="2.2"/><g transform="translate(1,0) skewX(-8)"><path d="M18.2 3.6 A4.4 4.95 0 1 0 19.1 7.6" stroke="#00ACC1" stroke-width="3.2" fill="none"/><path d="M14.8 7.05 H20.6" stroke="#00ACC1" stroke-width="2.5"/><ellipse cx="26.0" cy="6.95" rx="4.65" ry="4.95" stroke="#00ACC1" stroke-width="3.2" fill="none"/></g></g><path d="M987.5 96.5 L1004.5 113.5 M1004.5 96.5 L987.5 113.5" stroke="#CCCCCC" stroke-width="2.2"/><rect x="3091" y="92" width="24" height="23" rx="2.5" stroke="#CCCCCC" stroke-width="2.2" fill="none"/><path d="M3103 92 V115" stroke="#CCCCCC" stroke-width="2.2"/><g fill="#CCCCCC"><circle cx="3143.5" cy="105" r="2.6"/><circle cx="3154" cy="105" r="2.6"/><circle cx="3164.5" cy="105" r="2.6"/></g><g transform="translate(817.3,155.4) scale(1.0)"><path d="M2.4 3.5 H6.6 M0.4 7.6 H6.6 M4.4 11.6 H6.6" stroke="#00ACC1" stroke-width="2.2"/><g transform="translate(1,0) skewX(-8)"><path d="M18.2 3.6 A4.4 4.95 0 1 0 19.1 7.6" stroke="#00ACC1" stroke-width="3.2" fill="none"/><path d="M14.8 7.05 H20.6" stroke="#00ACC1" stroke-width="2.5"/><ellipse cx="26.0" cy="6.95" rx="4.65" ry="4.95" stroke="#00ACC1" stroke-width="3.2" fill="none"/></g></g><path d="M966 155 L975.5 164 L966 173" stroke="#A9A9A9" stroke-width="2.2" fill="none"/><rect x="2659" y="1204" width="27" height="27" rx="3" stroke="#CCCCCC" stroke-width="2" fill="none"/><path d="M2665 1211 L2672 1217.5 L2665 1224 M2673 1225 H2681" stroke="#CCCCCC" stroke-width="2" fill="none"/><path d="M2867 1203 V1229 M2854 1216 H2880" stroke="#CCCCCC" stroke-width="2.2"/><path d="M2892.5 1214 L2900 1221.5 L2907.5 1214" stroke="#CCCCCC" stroke-width="2" fill="none"/><rect x="2934" y="1204" width="26" height="25" rx="3" stroke="#CCCCCC" stroke-width="2.2" fill="none"/><path d="M2947 1204 V1229" stroke="#CCCCCC" stroke-width="2.2"/><path d="M2986 1208 H3008 M2992 1208 V1204 H3002 V1208 M2989 1209 L2991 1228.5 H3003 L3005 1209 M2993.5 1213 V1225 M2997 1213 V1225 M3000.5 1213 V1225" stroke="#CCCCCC" stroke-width="2" fill="none"/><g fill="#CCCCCC"><circle cx="3039.5" cy="1217" r="2.6"/><circle cx="3050" cy="1217" r="2.6"/><circle cx="3060.5" cy="1217" r="2.6"/></g><path d="M3092.5 1220 L3102.5 1210 L3112.5 1220" stroke="#CCCCCC" stroke-width="2.2" fill="none"/><path d="M3145 1207.5 L3163 1225.5 M3163 1207.5 L3145 1225.5" stroke="#CCCCCC" stroke-width="2.2"/><path d="M2748.9 1519.5 H2787.1 M2760.8 1513.3 V1524.6 M2775.2 1513.3 V1524.6 M2755.2 1528 V1538.4 M2753.3 1528 H2782.6 M2780.8 1526.5 V1538.4 M2768 1523.2 V1538.4 M2748.9 1538.4 H2788 M2767.5 1540 Q2762 1548.5 2749.3 1551.5 M2768.5 1541 Q2775 1548 2787 1549.8" stroke="#FFFFFF" stroke-width="3.3" fill="none"/><path d="M2838 1512 Q2852 1519 2852 1533 Q2852 1551 2833 1551 Q2821 1551 2815 1542 Q2833 1540 2836 1526 Q2838 1518 2838 1512 Z" stroke="#FFFFFF" stroke-width="2.2" fill="none" stroke-linejoin="round"/><circle cx="2887.5" cy="1522.5" r="6" fill="#FFFFFF"/><path d="M2903 1532 L2910 1532 L2905 1545.5 L2898 1545.5 Z" fill="#FFFFFF"/><path d="M2950.5 1513.5 L2940.9 1523.9 M2948.3 1518.5 H2958 M2966.5 1513.5 L2960.2 1523.9 M2964 1518.5 H2979 M2947.5 1526 L2951 1529.5 M2968.7 1522 L2971.3 1524.3 M2944.8 1529.5 V1552 M2953.9 1527 H2975.4 V1548.5 Q2975.4 1550.6 2972 1550.6 H2967.2 M2953.1 1532.2 H2967.4 V1546.5 H2953.1 M2953.1 1532.2 V1549 M2953.1 1539.1 H2967.4" stroke="#FFFFFF" stroke-width="3.4" fill="none"/><circle cx="3024" cy="1531" r="19" stroke="#FFFFFF" stroke-width="2.4" fill="none"/><circle cx="3017" cy="1527" r="2.3" fill="#FFFFFF"/><circle cx="3031" cy="1527" r="2.3" fill="#FFFFFF"/><path d="M3014 1537 Q3024 1545 3034 1537" stroke="#FFFFFF" stroke-width="2.4" fill="none"/><path d="M3101.0 1527.4 L3106.8 1527.9 L3106.8 1534.1 L3101.0 1534.6 L3099.7 1537.7 L3103.4 1542.1 L3099.1 1546.4 L3094.7 1542.7 L3091.6 1544.0 L3091.1 1549.8 L3084.9 1549.8 L3084.4 1544.0 L3081.3 1542.7 L3076.9 1546.4 L3072.6 1542.1 L3076.3 1537.7 L3075.0 1534.6 L3069.2 1534.1 L3069.2 1527.9 L3075.0 1527.4 L3076.3 1524.3 L3072.6 1519.9 L3076.9 1515.6 L3081.3 1519.3 L3084.4 1518.0 L3084.9 1512.2 L3091.1 1512.2 L3091.6 1518.0 L3094.7 1519.3 L3099.1 1515.6 L3103.4 1519.9 L3099.7 1524.3 Z" stroke="#FFFFFF" stroke-width="2.4" fill="none" stroke-linejoin="round"/><circle cx="3088" cy="1531" r="5" stroke="#FFFFFF" stroke-width="2.4" fill="none"/><path d="M25.5 1877.4 L33.4 1884.9 L25.5 1892.6 M42.3 1870.4 L34.4 1877.7 L42.3 1885.1" stroke="#FFFFFF" stroke-width="2.1" fill="none"/><circle cx="211.5" cy="1883" r="11" stroke="#CCCCCC" stroke-width="2" fill="none"/><path d="M206.5 1878 L216.5 1888 M216.5 1878 L206.5 1888" stroke="#CCCCCC" stroke-width="2"/><path d="M265 1872 L277 1894 H253 Z M265 1879 V1887 M265 1889.5 V1891.5" stroke="#CCCCCC" stroke-width="2" fill="none" stroke-linejoin="round"/><path d="M339 1874 Q335 1879 339 1884 M352 1874 Q356 1879 352 1884 M336 1871 Q330 1879 336 1887 M355 1871 Q361 1879 355 1887 M345.5 1882 L340 1896 M345.5 1882 L351 1896 M341.5 1891 H349.5" stroke="#CCCCCC" stroke-width="2" fill="none"/><circle cx="345.5" cy="1879" r="2.8" fill="#CCCCCC"/><path d="M2812 1872 L2801 1885 H2809 L2803 1897 M2812 1872 L2816 1872 L2810 1881 H2817 L2803 1897" stroke="#CCCCCC" stroke-width="1.8" fill="none" stroke-linejoin="round"/><circle cx="2866.5" cy="1881" r="3" fill="#CCCCCC"/><path d="M2866.5 1884 V1896 M2860 1888 Q2856 1884 2856 1880 Q2856 1870 2866.5 1870 Q2877 1870 2877 1880 Q2877 1884 2873 1888 M2862 1885 Q2860 1883 2860 1880 Q2860 1874 2866.5 1874 Q2873 1874 2873 1880 Q2873 1883 2871 1885" stroke="#CCCCCC" stroke-width="2" fill="none"/><circle cx="3012.5" cy="1882" r="11" stroke="#CCCCCC" stroke-width="2" fill="none"/><path d="M3005 1889.5 L3020 1874.5" stroke="#CCCCCC" stroke-width="2"/><path d="M3146 1892 H3167 M3148 1892 V1881 Q3148 1872 3156.5 1872 Q3165 1872 3165 1881 V1892 M3153 1896 H3160" stroke="#CCCCCC" stroke-width="2" fill="none"/>
</svg>
</body></html>
